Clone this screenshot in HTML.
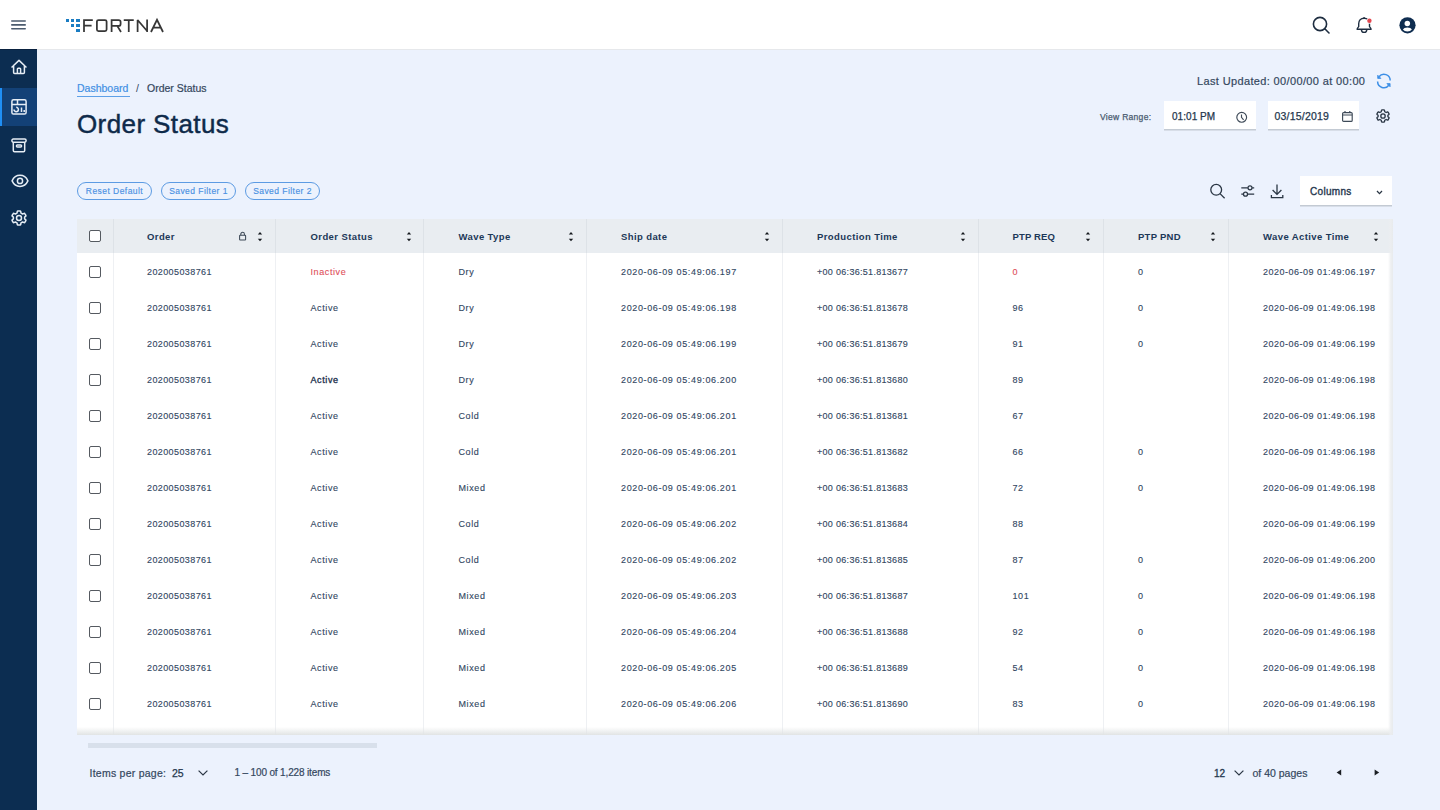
<!DOCTYPE html>
<html><head><meta charset="utf-8">
<style>
*{margin:0;padding:0;box-sizing:border-box}
html,body{width:1440px;height:810px;overflow:hidden}
body{position:relative;background:#ecf2fd;font-family:"Liberation Sans",sans-serif;color:#34475e}
.t{position:absolute;white-space:nowrap;line-height:12px}
#hdr{position:absolute;left:0;top:0;width:1440px;height:49px;background:#fff;box-shadow:0 1px 0 #e6e8eb}
#side{position:absolute;left:0;top:49px;width:37px;height:761px;background:#0c2d51;border-top:1px solid #0a2240}
#side .act{position:absolute;left:0;top:38px;width:37px;height:38px;background:#134177}
#side .bar{position:absolute;left:0;top:38px;width:2px;height:38px;background:#1f8ff5}
svg{position:absolute;overflow:visible}
.chip{position:absolute;top:182px;height:18px;border:1px solid #5c9be3;border-radius:9px}
.chip span{position:absolute;left:0;right:0;top:3px;text-align:center;font-size:8.5px;line-height:10px;letter-spacing:0.45px;color:#4a90e2;-webkit-text-stroke:0.15px #4a90e2}
#tbl{position:absolute;left:77px;top:219px;width:1316px;height:516px;background:#fff;overflow:hidden}
#thead{position:absolute;left:0;top:0;width:1316px;height:34px;background:#e9edf1}
.vl{position:absolute;top:0;width:1px;height:516px;background:#eef0f3}
.vlh{position:absolute;top:0;width:1px;height:34px;background:#dde2e7}
.cb{position:absolute;width:12px;height:12px;border:1.6px solid #555a60;border-radius:2px;background:#fff}
.th{position:absolute;white-space:nowrap;font-size:9.5px;line-height:12px;font-weight:bold;letter-spacing:0.4px;color:#1c3858}
.td{position:absolute;white-space:nowrap;font-size:9px;line-height:12px;color:#31465f;-webkit-text-stroke:0.12px #31465f}
.red{color:#e0505a;-webkit-text-stroke-color:#e0505a}
#shb{position:absolute;left:0;top:508px;width:1316px;height:8px;background:linear-gradient(to bottom,rgba(230,232,232,0),rgba(225,228,228,1))}
#shr{position:absolute;left:1311px;top:0;width:5px;height:516px;background:linear-gradient(to right,rgba(240,241,242,0),rgba(236,238,240,0.9) 55%,rgba(232,235,237,1))}
.box{position:absolute;background:#fff;box-shadow:0 1.5px 0 #c3cad3}
</style></head><body>

<div id="hdr"></div>
<svg style="left:11px;top:20px" width="15" height="10" viewBox="0 0 15 10"><path d="M0.8 1 H14.2 M0.8 4.9 H14.2 M0.8 8.8 H14.2" stroke="#4b5b6e" stroke-width="1.6" stroke-linecap="round"/></svg>
<div style="position:absolute;left:66px;top:19px;width:3.4px;height:3px;background:#1a7cc2"></div>
<div style="position:absolute;left:71px;top:19px;width:3.4px;height:3px;background:#1a7cc2"></div>
<div style="position:absolute;left:76.3px;top:19px;width:3.4px;height:3px;background:#1a7cc2"></div>
<div style="position:absolute;left:71px;top:24px;width:3.4px;height:3px;background:#1a7cc2"></div>
<div style="position:absolute;left:76.3px;top:24px;width:3.4px;height:3px;background:#1a7cc2"></div>
<div style="position:absolute;left:76.3px;top:29px;width:3.4px;height:3px;background:#1a7cc2"></div>
<svg style="left:83px;top:19px" width="81" height="13" viewBox="0 0 81 13" fill="none" stroke="#363636" stroke-width="1.75"><path d="M1 13 V1 H9.8 M1 6.7 H8.6"/><rect x="13.9" y="1" width="9.7" height="11" rx="1.6"/><path d="M28.6 13 V1 H35.6 Q37.6 1 37.6 3 V4.9 Q37.6 6.9 35.6 6.9 H28.6 M34.2 6.9 L38 13"/><path d="M40.75 1 H50.75 M45.75 1 V13"/><path d="M54.6 13 V1 L64.1 12 M64.1 13 V0.5" stroke-linejoin="bevel"/><path d="M68 13 L74 0.8 L80 13 M70.2 8.6 H77.8"/></svg>
<svg style="left:1312px;top:16px" width="19" height="19" viewBox="0 0 19 19" fill="none" stroke="#1e2d40" stroke-width="1.6"><circle cx="8" cy="8" r="6.6"/><path d="M12.8 12.8 L17 17" stroke-linecap="round"/></svg>
<svg style="left:1356px;top:16px" width="18" height="19" viewBox="0 0 18 19" fill="none" stroke="#1e2d40" stroke-width="1.4" stroke-linejoin="round"><path d="M1.1 13.3 H15.1 Q15.1 12.4 13.5 10.6 V7.8 C13.5 4.6 11.4 2.2 8.1 2.2 C4.8 2.2 2.7 4.6 2.7 7.8 V10.6 Q1.1 12.4 1.1 13.3Z"/><path d="M8.1 1.2 V2.2" stroke-width="1.6"/><path d="M5.4 13.4 A2.7 3 0 0 0 10.8 13.4"/><circle cx="13.4" cy="4.8" r="2.9" fill="#fff" stroke="none"/><circle cx="13.4" cy="4.8" r="2.2" fill="#e4474f" stroke="none"/></svg>
<svg style="left:1398.5px;top:17px" width="17" height="17" viewBox="0 0 17 17"><circle cx="8.5" cy="8.3" r="8.1" fill="#0f2d50"/><circle cx="8.3" cy="6.6" r="2.75" fill="#fff"/><path d="M3.9 12.6 Q4.8 10.6 8.4 10.6 Q12 10.6 12.9 12.6 Q11.4 14.6 8.4 14.6 Q5.4 14.6 3.9 12.6Z" fill="#fff"/></svg>
<div id="side"><div class="act"></div><div class="bar"></div></div>
<svg style="left:11px;top:59px" width="16" height="16" viewBox="0 0 16 16" fill="none" stroke="#e6edf5" stroke-width="1.5" stroke-linejoin="round" stroke-linecap="round"><path d="M1 8 L8 1.4 L15 8 M2.6 6.6 V13.6 Q2.6 14.6 3.6 14.6 H12.4 Q13.4 14.6 13.4 13.6 V6.6 M6.4 14.6 V10 Q6.4 9.2 7.2 9.2 H8.8 Q9.6 9.2 9.6 10 V14.6"/></svg>
<svg style="left:11px;top:99px" width="16" height="16" viewBox="0 0 16 16" fill="none" stroke="#e6edf5" stroke-width="1.5"><rect x="0.9" y="0.8" width="14.2" height="14.2" rx="1.6"/><path d="M0.9 5.4 H15.1 M6.5 0.8 V5.4 M10.5 8.6 V13 M13.2 11 V13" /><path d="M5.2 8.3 A2.2 2.2 0 1 1 3 10.5" stroke-width="1.5"/></svg>
<svg style="left:11px;top:137.5px" width="16" height="15" viewBox="0 0 16 15" fill="none" stroke="#e6edf5" stroke-width="1.5" stroke-linejoin="round"><rect x="0.9" y="1" width="14.2" height="3.2" rx="1.4"/><path d="M2.3 4.2 V12.6 Q2.3 13.8 3.5 13.8 H12.5 Q13.7 13.8 13.7 12.6 V4.2"/><rect x="5.4" y="6.9" width="5.2" height="2" rx="1"/></svg>
<svg style="left:10.5px;top:174px" width="19" height="14" viewBox="0 0 19 14" fill="none" stroke="#e6edf5" stroke-width="1.5"><path d="M1.1 6.9 C4.4 -0.5 13.6 -0.5 16.9 6.9 C13.6 14.3 4.4 14.3 1.1 6.9Z"/><circle cx="9" cy="6.9" r="2.6"/></svg>
<svg style="left:11px;top:210px" width="16" height="16" viewBox="0 0 16 16" fill="none" stroke="#e6edf5" stroke-width="1.5" stroke-linejoin="round"><path d="M6.9 1 H9.1 Q9.6 1 9.7 1.5 L10 3.1 L11.6 4 L13.1 3.4 Q13.6 3.2 13.8 3.6 L14.9 5.5 Q15.1 5.9 14.8 6.2 L13.6 7.2 V8.8 L14.8 9.8 Q15.1 10.1 14.9 10.5 L13.8 12.4 Q13.6 12.8 13.1 12.6 L11.6 12 L10 12.9 L9.7 14.5 Q9.6 15 9.1 15 H6.9 Q6.4 15 6.3 14.5 L6 12.9 L4.4 12 L2.9 12.6 Q2.4 12.8 2.2 12.4 L1.1 10.5 Q0.9 10.1 1.2 9.8 L2.4 8.8 V7.2 L1.2 6.2 Q0.9 5.9 1.1 5.5 L2.2 3.6 Q2.4 3.2 2.9 3.4 L4.4 4 L6 3.1 L6.3 1.5 Q6.4 1 6.9 1Z"/><circle cx="8" cy="8" r="2.5"/></svg>
<div class="t" style="left:77px;top:82px;font-size:10.5px;color:#3f8fe4;-webkit-text-stroke:0.2px #3f8fe4">Dashboard</div>
<div style="position:absolute;left:77px;top:95.5px;width:53px;height:1.5px;background:#5da0e8"></div>
<div class="t" style="left:136px;top:82px;font-size:10.5px;color:#34475e">/</div>
<div class="t" style="left:147px;top:82px;font-size:10.5px;color:#34475e;-webkit-text-stroke:0.2px #34475e">Order Status</div>
<div class="t" style="left:77px;top:109px;font-size:26px;line-height:30px;letter-spacing:0.4px;color:#0e2a4a;-webkit-text-stroke:0.45px #0e2a4a">Order Status</div>
<div class="t" style="left:1197px;top:75px;font-size:11px;color:#34475e;letter-spacing:0.36px;-webkit-text-stroke:0.2px #34475e">Last Updated: 00/00/00 at 00:00</div>
<svg style="left:1376px;top:73px" width="16" height="16" viewBox="0 0 16 16" fill="none" stroke="#3d8fe6" stroke-width="1.5"><path d="M14.2 7.6 A6.2 6.2 0 0 0 3 3.8 M1.6 8.6 A6.2 6.2 0 0 0 12.8 12.2"/><path d="M1.7 2.2 V5.4 H4.9Z M14.1 13.8 V10.6 H10.9Z" fill="#3d8fe6" stroke-width="0.8" stroke-linejoin="round"/></svg>
<div class="t" style="left:1100px;top:111px;font-size:8.5px;color:#4a5b70;letter-spacing:0.3px;-webkit-text-stroke:0.25px #4a5b70">View Range:</div>
<div class="box" style="left:1164px;top:101px;width:92px;height:28px"></div>
<div class="t" style="left:1172px;top:111px;font-size:10px;color:#24364d;letter-spacing:0.05px;-webkit-text-stroke:0.25px #24364d">01:01 PM</div>
<svg style="left:1235.5px;top:111.5px" width="12" height="11" viewBox="0 0 12 11" fill="none" stroke="#3e4a58" stroke-width="1.15"><circle cx="5.7" cy="5.3" r="4.9"/><path d="M5.5 2.4 V5.4 L7.6 7.8"/></svg>
<div class="box" style="left:1268px;top:101px;width:91px;height:28px"></div>
<div class="t" style="left:1274.5px;top:110px;font-size:10.5px;color:#24364d;letter-spacing:0.2px;-webkit-text-stroke:0.25px #24364d">03/15/2019</div>
<svg style="left:1341.5px;top:111px" width="11" height="11" viewBox="0 0 11 11" fill="none" stroke="#3e4a58" stroke-width="1.15"><rect x="0.6" y="1.6" width="9.6" height="8.8" rx="1"/><path d="M0.6 4 H10.2 M3 0 V2 M7.8 0 V2"/></svg>
<svg style="left:1376px;top:109px" width="14" height="14" viewBox="0 0 16 16" fill="none" stroke="#2a3644" stroke-width="1.5" stroke-linejoin="round"><path d="M6.9 1 H9.1 Q9.6 1 9.7 1.5 L10 3.1 L11.6 4 L13.1 3.4 Q13.6 3.2 13.8 3.6 L14.9 5.5 Q15.1 5.9 14.8 6.2 L13.6 7.2 V8.8 L14.8 9.8 Q15.1 10.1 14.9 10.5 L13.8 12.4 Q13.6 12.8 13.1 12.6 L11.6 12 L10 12.9 L9.7 14.5 Q9.6 15 9.1 15 H6.9 Q6.4 15 6.3 14.5 L6 12.9 L4.4 12 L2.9 12.6 Q2.4 12.8 2.2 12.4 L1.1 10.5 Q0.9 10.1 1.2 9.8 L2.4 8.8 V7.2 L1.2 6.2 Q0.9 5.9 1.1 5.5 L2.2 3.6 Q2.4 3.2 2.9 3.4 L4.4 4 L6 3.1 L6.3 1.5 Q6.4 1 6.9 1Z"/><circle cx="8" cy="8" r="2.5"/></svg>
<div class="chip" style="left:77px;width:75px"><span>Reset Default</span></div>
<div class="chip" style="left:161px;width:75px"><span>Saved Filter 1</span></div>
<div class="chip" style="left:245px;width:75px"><span>Saved Filter 2</span></div>
<svg style="left:1209px;top:183px" width="17" height="17" viewBox="0 0 17 17" fill="none" stroke="#2a3644" stroke-width="1.3"><circle cx="7.2" cy="6.8" r="5.4"/><path d="M11 10.6 L15.6 15.2"/></svg>
<svg style="left:1240px;top:184px" width="16" height="14" viewBox="0 0 16 14" fill="none" stroke="#2a3644" stroke-width="1.25"><path d="M1.3 3.8 H7.8 M12.2 3.8 H14.2 M1.3 10.2 H3.4 M7.6 10.2 H14.2"/><circle cx="10" cy="3.8" r="2" /><circle cx="5.5" cy="10.2" r="2"/></svg>
<svg style="left:1270px;top:184px" width="15" height="15" viewBox="0 0 15 15" fill="none" stroke="#2a3644" stroke-width="1.3"><path d="M7 0.6 V10.2 M2.6 6 L7 10.4 L11.4 6 M1.4 11 V13.6 H12.8 V11"/></svg>
<div class="box" style="left:1300px;top:176px;width:92px;height:29px"></div>
<div class="t" style="left:1310px;top:186px;font-size:10px;color:#24364d;letter-spacing:0.3px;-webkit-text-stroke:0.35px #24364d">Columns</div>
<svg style="left:1376px;top:190px" width="7" height="5" viewBox="0 0 7 5" fill="none" stroke="#2a3644" stroke-width="1.3"><path d="M1 1 L3.5 3.6 L6 1"/></svg>
<div id="tbl"><div id="thead"></div>
<div class="vl" style="left:36px"></div><div class="vlh" style="left:36px"></div>
<div class="vl" style="left:198px"></div><div class="vlh" style="left:198px"></div>
<div class="vl" style="left:346px"></div><div class="vlh" style="left:346px"></div>
<div class="vl" style="left:509px"></div><div class="vlh" style="left:509px"></div>
<div class="vl" style="left:705px"></div><div class="vlh" style="left:705px"></div>
<div class="vl" style="left:901px"></div><div class="vlh" style="left:901px"></div>
<div class="vl" style="left:1026px"></div><div class="vlh" style="left:1026px"></div>
<div class="vl" style="left:1151px"></div><div class="vlh" style="left:1151px"></div>
<div id="shb"></div><div id="shr"></div>
</div>
<div class="cb" style="left:89px;top:230px"></div>
<div class="th" style="left:147px;top:231px;letter-spacing:0.4px">Order</div>
<svg style="left:257px;top:232px" width="6" height="10" viewBox="0 0 6 10"><path d="M0.8 2.5 L3 0.1 L5.2 2.5Z M0.8 6.8 L3 9.2 L5.2 6.8Z" fill="#15191e"/></svg>
<div class="th" style="left:310.5px;top:231px;letter-spacing:0.4px">Order Status</div>
<svg style="left:406px;top:232px" width="6" height="10" viewBox="0 0 6 10"><path d="M0.8 2.5 L3 0.1 L5.2 2.5Z M0.8 6.8 L3 9.2 L5.2 6.8Z" fill="#15191e"/></svg>
<div class="th" style="left:458.5px;top:231px;letter-spacing:0.4px">Wave Type</div>
<svg style="left:568px;top:232px" width="6" height="10" viewBox="0 0 6 10"><path d="M0.8 2.5 L3 0.1 L5.2 2.5Z M0.8 6.8 L3 9.2 L5.2 6.8Z" fill="#15191e"/></svg>
<div class="th" style="left:621px;top:231px;letter-spacing:0.4px">Ship date</div>
<svg style="left:763.5px;top:232px" width="6" height="10" viewBox="0 0 6 10"><path d="M0.8 2.5 L3 0.1 L5.2 2.5Z M0.8 6.8 L3 9.2 L5.2 6.8Z" fill="#15191e"/></svg>
<div class="th" style="left:817px;top:231px;letter-spacing:0.4px">Production Time</div>
<svg style="left:960px;top:232px" width="6" height="10" viewBox="0 0 6 10"><path d="M0.8 2.5 L3 0.1 L5.2 2.5Z M0.8 6.8 L3 9.2 L5.2 6.8Z" fill="#15191e"/></svg>
<div class="th" style="left:1012.5px;top:231px;letter-spacing:0.15px">PTP REQ</div>
<svg style="left:1084.5px;top:232px" width="6" height="10" viewBox="0 0 6 10"><path d="M0.8 2.5 L3 0.1 L5.2 2.5Z M0.8 6.8 L3 9.2 L5.2 6.8Z" fill="#15191e"/></svg>
<div class="th" style="left:1138px;top:231px;letter-spacing:0.25px">PTP PND</div>
<svg style="left:1210px;top:232px" width="6" height="10" viewBox="0 0 6 10"><path d="M0.8 2.5 L3 0.1 L5.2 2.5Z M0.8 6.8 L3 9.2 L5.2 6.8Z" fill="#15191e"/></svg>
<div class="th" style="left:1263px;top:231px;letter-spacing:0.4px">Wave Active Time</div>
<svg style="left:1372.5px;top:232px" width="6" height="10" viewBox="0 0 6 10"><path d="M0.8 2.5 L3 0.1 L5.2 2.5Z M0.8 6.8 L3 9.2 L5.2 6.8Z" fill="#15191e"/></svg>
<svg style="left:238.5px;top:231px" width="8" height="10" viewBox="0 0 8 10" fill="none" stroke="#3e4a58" stroke-width="1.05"><rect x="0.6" y="4.2" width="6" height="4.8" rx="0.6"/><path d="M1.8 4.2 V3.1 A1.8 1.8 0 0 1 5.4 3.1 V4.2"/></svg>
<div class="cb" style="left:89px;top:266px"></div>
<div class="td" style="left:147px;top:266px;letter-spacing:0.4px">202005038761</div>
<div class="td red" style="left:310.5px;top:266px;letter-spacing:0.6px">Inactive</div>
<div class="td" style="left:458.5px;top:266px;letter-spacing:0.6px">Dry</div>
<div class="td" style="left:621px;top:266px;letter-spacing:0.64px">2020-06-09 05:49:06.197</div>
<div class="td" style="left:817px;top:266px;letter-spacing:0.3px">+00 06:36:51.813677</div>
<div class="td red" style="left:1012.5px;top:266px;letter-spacing:0.6px">0</div>
<div class="td" style="left:1138px;top:266px;letter-spacing:0.6px">0</div>
<div class="td" style="left:1263px;top:266px;letter-spacing:0.5px">2020-06-09 01:49:06.197</div>
<div class="cb" style="left:89px;top:302px"></div>
<div class="td" style="left:147px;top:302px;letter-spacing:0.4px">202005038761</div>
<div class="td" style="left:310.5px;top:302px;letter-spacing:0.6px">Active</div>
<div class="td" style="left:458.5px;top:302px;letter-spacing:0.6px">Dry</div>
<div class="td" style="left:621px;top:302px;letter-spacing:0.64px">2020-06-09 05:49:06.198</div>
<div class="td" style="left:817px;top:302px;letter-spacing:0.3px">+00 06:36:51.813678</div>
<div class="td" style="left:1012.5px;top:302px;letter-spacing:0.6px">96</div>
<div class="td" style="left:1138px;top:302px;letter-spacing:0.6px">0</div>
<div class="td" style="left:1263px;top:302px;letter-spacing:0.5px">2020-06-09 01:49:06.198</div>
<div class="cb" style="left:89px;top:338px"></div>
<div class="td" style="left:147px;top:338px;letter-spacing:0.4px">202005038761</div>
<div class="td" style="left:310.5px;top:338px;letter-spacing:0.6px">Active</div>
<div class="td" style="left:458.5px;top:338px;letter-spacing:0.6px">Dry</div>
<div class="td" style="left:621px;top:338px;letter-spacing:0.64px">2020-06-09 05:49:06.199</div>
<div class="td" style="left:817px;top:338px;letter-spacing:0.3px">+00 06:36:51.813679</div>
<div class="td" style="left:1012.5px;top:338px;letter-spacing:0.6px">91</div>
<div class="td" style="left:1138px;top:338px;letter-spacing:0.6px">0</div>
<div class="td" style="left:1263px;top:338px;letter-spacing:0.5px">2020-06-09 01:49:06.199</div>
<div class="cb" style="left:89px;top:374px"></div>
<div class="td" style="left:147px;top:374px;letter-spacing:0.4px">202005038761</div>
<div class="td" style="left:310.5px;top:374px;letter-spacing:0.6px;color:#1f3350;-webkit-text-stroke:0.35px #1f3350">Active</div>
<div class="td" style="left:458.5px;top:374px;letter-spacing:0.6px">Dry</div>
<div class="td" style="left:621px;top:374px;letter-spacing:0.64px">2020-06-09 05:49:06.200</div>
<div class="td" style="left:817px;top:374px;letter-spacing:0.3px">+00 06:36:51.813680</div>
<div class="td" style="left:1012.5px;top:374px;letter-spacing:0.6px">89</div>
<div class="td" style="left:1263px;top:374px;letter-spacing:0.5px">2020-06-09 01:49:06.198</div>
<div class="cb" style="left:89px;top:410px"></div>
<div class="td" style="left:147px;top:410px;letter-spacing:0.4px">202005038761</div>
<div class="td" style="left:310.5px;top:410px;letter-spacing:0.6px">Active</div>
<div class="td" style="left:458.5px;top:410px;letter-spacing:0.6px">Cold</div>
<div class="td" style="left:621px;top:410px;letter-spacing:0.64px">2020-06-09 05:49:06.201</div>
<div class="td" style="left:817px;top:410px;letter-spacing:0.3px">+00 06:36:51.813681</div>
<div class="td" style="left:1012.5px;top:410px;letter-spacing:0.6px">67</div>
<div class="td" style="left:1263px;top:410px;letter-spacing:0.5px">2020-06-09 01:49:06.198</div>
<div class="cb" style="left:89px;top:446px"></div>
<div class="td" style="left:147px;top:446px;letter-spacing:0.4px">202005038761</div>
<div class="td" style="left:310.5px;top:446px;letter-spacing:0.6px">Active</div>
<div class="td" style="left:458.5px;top:446px;letter-spacing:0.6px">Cold</div>
<div class="td" style="left:621px;top:446px;letter-spacing:0.64px">2020-06-09 05:49:06.201</div>
<div class="td" style="left:817px;top:446px;letter-spacing:0.3px">+00 06:36:51.813682</div>
<div class="td" style="left:1012.5px;top:446px;letter-spacing:0.6px">66</div>
<div class="td" style="left:1138px;top:446px;letter-spacing:0.6px">0</div>
<div class="td" style="left:1263px;top:446px;letter-spacing:0.5px">2020-06-09 01:49:06.198</div>
<div class="cb" style="left:89px;top:482px"></div>
<div class="td" style="left:147px;top:482px;letter-spacing:0.4px">202005038761</div>
<div class="td" style="left:310.5px;top:482px;letter-spacing:0.6px">Active</div>
<div class="td" style="left:458.5px;top:482px;letter-spacing:0.6px">Mixed</div>
<div class="td" style="left:621px;top:482px;letter-spacing:0.64px">2020-06-09 05:49:06.201</div>
<div class="td" style="left:817px;top:482px;letter-spacing:0.3px">+00 06:36:51.813683</div>
<div class="td" style="left:1012.5px;top:482px;letter-spacing:0.6px">72</div>
<div class="td" style="left:1138px;top:482px;letter-spacing:0.6px">0</div>
<div class="td" style="left:1263px;top:482px;letter-spacing:0.5px">2020-06-09 01:49:06.198</div>
<div class="cb" style="left:89px;top:518px"></div>
<div class="td" style="left:147px;top:518px;letter-spacing:0.4px">202005038761</div>
<div class="td" style="left:310.5px;top:518px;letter-spacing:0.6px">Active</div>
<div class="td" style="left:458.5px;top:518px;letter-spacing:0.6px">Cold</div>
<div class="td" style="left:621px;top:518px;letter-spacing:0.64px">2020-06-09 05:49:06.202</div>
<div class="td" style="left:817px;top:518px;letter-spacing:0.3px">+00 06:36:51.813684</div>
<div class="td" style="left:1012.5px;top:518px;letter-spacing:0.6px">88</div>
<div class="td" style="left:1263px;top:518px;letter-spacing:0.5px">2020-06-09 01:49:06.199</div>
<div class="cb" style="left:89px;top:554px"></div>
<div class="td" style="left:147px;top:554px;letter-spacing:0.4px">202005038761</div>
<div class="td" style="left:310.5px;top:554px;letter-spacing:0.6px">Active</div>
<div class="td" style="left:458.5px;top:554px;letter-spacing:0.6px">Cold</div>
<div class="td" style="left:621px;top:554px;letter-spacing:0.64px">2020-06-09 05:49:06.202</div>
<div class="td" style="left:817px;top:554px;letter-spacing:0.3px">+00 06:36:51.813685</div>
<div class="td" style="left:1012.5px;top:554px;letter-spacing:0.6px">87</div>
<div class="td" style="left:1138px;top:554px;letter-spacing:0.6px">0</div>
<div class="td" style="left:1263px;top:554px;letter-spacing:0.5px">2020-06-09 01:49:06.200</div>
<div class="cb" style="left:89px;top:590px"></div>
<div class="td" style="left:147px;top:590px;letter-spacing:0.4px">202005038761</div>
<div class="td" style="left:310.5px;top:590px;letter-spacing:0.6px">Active</div>
<div class="td" style="left:458.5px;top:590px;letter-spacing:0.6px">Mixed</div>
<div class="td" style="left:621px;top:590px;letter-spacing:0.64px">2020-06-09 05:49:06.203</div>
<div class="td" style="left:817px;top:590px;letter-spacing:0.3px">+00 06:36:51.813687</div>
<div class="td" style="left:1012.5px;top:590px;letter-spacing:0.6px">101</div>
<div class="td" style="left:1138px;top:590px;letter-spacing:0.6px">0</div>
<div class="td" style="left:1263px;top:590px;letter-spacing:0.5px">2020-06-09 01:49:06.198</div>
<div class="cb" style="left:89px;top:626px"></div>
<div class="td" style="left:147px;top:626px;letter-spacing:0.4px">202005038761</div>
<div class="td" style="left:310.5px;top:626px;letter-spacing:0.6px">Active</div>
<div class="td" style="left:458.5px;top:626px;letter-spacing:0.6px">Mixed</div>
<div class="td" style="left:621px;top:626px;letter-spacing:0.64px">2020-06-09 05:49:06.204</div>
<div class="td" style="left:817px;top:626px;letter-spacing:0.3px">+00 06:36:51.813688</div>
<div class="td" style="left:1012.5px;top:626px;letter-spacing:0.6px">92</div>
<div class="td" style="left:1138px;top:626px;letter-spacing:0.6px">0</div>
<div class="td" style="left:1263px;top:626px;letter-spacing:0.5px">2020-06-09 01:49:06.198</div>
<div class="cb" style="left:89px;top:662px"></div>
<div class="td" style="left:147px;top:662px;letter-spacing:0.4px">202005038761</div>
<div class="td" style="left:310.5px;top:662px;letter-spacing:0.6px">Active</div>
<div class="td" style="left:458.5px;top:662px;letter-spacing:0.6px">Mixed</div>
<div class="td" style="left:621px;top:662px;letter-spacing:0.64px">2020-06-09 05:49:06.205</div>
<div class="td" style="left:817px;top:662px;letter-spacing:0.3px">+00 06:36:51.813689</div>
<div class="td" style="left:1012.5px;top:662px;letter-spacing:0.6px">54</div>
<div class="td" style="left:1138px;top:662px;letter-spacing:0.6px">0</div>
<div class="td" style="left:1263px;top:662px;letter-spacing:0.5px">2020-06-09 01:49:06.198</div>
<div class="cb" style="left:89px;top:698px"></div>
<div class="td" style="left:147px;top:698px;letter-spacing:0.4px">202005038761</div>
<div class="td" style="left:310.5px;top:698px;letter-spacing:0.6px">Active</div>
<div class="td" style="left:458.5px;top:698px;letter-spacing:0.6px">Mixed</div>
<div class="td" style="left:621px;top:698px;letter-spacing:0.64px">2020-06-09 05:49:06.206</div>
<div class="td" style="left:817px;top:698px;letter-spacing:0.3px">+00 06:36:51.813690</div>
<div class="td" style="left:1012.5px;top:698px;letter-spacing:0.6px">83</div>
<div class="td" style="left:1138px;top:698px;letter-spacing:0.6px">0</div>
<div class="td" style="left:1263px;top:698px;letter-spacing:0.5px">2020-06-09 01:49:06.198</div>
<div style="position:absolute;left:88px;top:743px;width:289px;height:5px;background:#d8e0eb"></div>
<div class="t" style="left:89.5px;top:767px;font-size:10.5px;color:#34475e;letter-spacing:0.25px;-webkit-text-stroke:0.2px #34475e">Items per page:</div>
<div class="t" style="left:172px;top:767px;font-size:10.5px;color:#24364d;-webkit-text-stroke:0.25px #24364d">25</div>
<svg style="left:197.5px;top:770px" width="10" height="6" viewBox="0 0 10 6" fill="none" stroke="#2a3644" stroke-width="1.2"><path d="M0.6 0.6 L5 5 L9.4 0.6"/></svg>
<div class="t" style="left:234.5px;top:767px;font-size:10px;letter-spacing:-0.15px;color:#34475e;-webkit-text-stroke:0.2px #34475e">1 – 100 of 1,228 items</div>
<div class="t" style="left:1214px;top:767.5px;font-size:10px;letter-spacing:-0.1px;color:#24364d;-webkit-text-stroke:0.3px #24364d">12</div>
<svg style="left:1234px;top:770px" width="10" height="6" viewBox="0 0 10 6" fill="none" stroke="#2a3644" stroke-width="1.2"><path d="M0.6 0.6 L5 5 L9.4 0.6"/></svg>
<div class="t" style="left:1252.5px;top:767px;font-size:10.5px;color:#34475e;-webkit-text-stroke:0.2px #34475e">of 40 pages</div>
<svg style="left:1336px;top:769px" width="6" height="7" viewBox="0 0 6 7"><path d="M5.2 0.4 V6.6 L0.6 3.5Z" fill="#1b1f24"/></svg>
<svg style="left:1374px;top:769px" width="6" height="7" viewBox="0 0 6 7"><path d="M0.6 0.4 V6.6 L5.2 3.5Z" fill="#1b1f24"/></svg>
</body></html>
